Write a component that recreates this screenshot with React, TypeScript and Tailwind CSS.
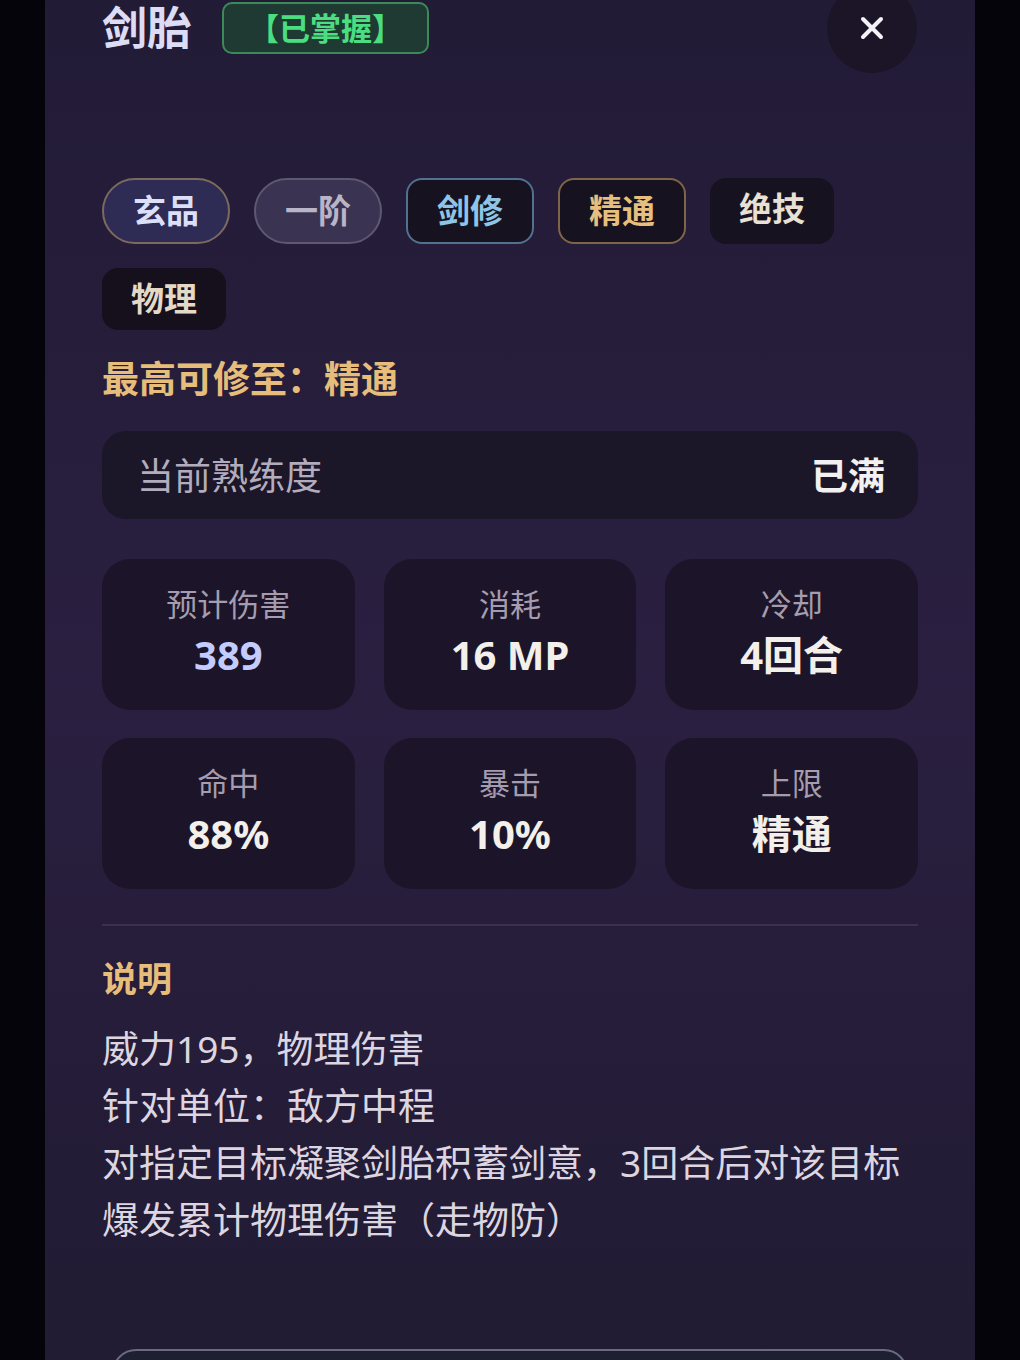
import React from 'react';

const tags = [
  { label: '玄品', cls: 'rounded-full border-2 border-[#7d6a5e] bg-[#2e2b55] text-[#dcdff8]' },
  { label: '一阶', cls: 'rounded-full border-2 border-[#5f5870] bg-[#3a3352] text-[#b9b5c8]' },
  { label: '剑修', cls: 'rounded-2xl border-2 border-[#52708f] bg-[#17121f] text-[#8ec5e6]' },
  { label: '精通', cls: 'rounded-2xl border-2 border-[#7f6548] bg-[#17121f] text-[#e6bf7e]' },
  { label: '绝技', cls: 'rounded-2xl bg-[#17121f] text-[#e8e0d4]' },
  { label: '物理', cls: 'rounded-2xl bg-[#15101c] text-[#e3d9c6]' },
];

const stats = [
  { label: '预计伤害', value: '389', accent: true },
  { label: '消耗', value: '16 MP' },
  { label: '冷却', value: '4回合' },
  { label: '命中', value: '88%' },
  { label: '暴击', value: '10%' },
  { label: '上限', value: '精通' },
];

const desc = ['威力195，物理伤害', '针对单位：敌方中程', '对指定目标凝聚剑胎积蓄剑意，3回合后对该目标', '爆发累计物理伤害（走物防）'];

export default function App() {
  return (
    <div
      className="w-[1020px] h-[1360px] overflow-hidden bg-[#05040a] flex justify-center"
      style={{ fontFamily: '"Noto Sans", "Noto Sans CJK SC", sans-serif' }}
    >
      <div className="w-[930px] h-full bg-gradient-to-b from-[#221b36] via-[#2a1f40] to-[#211b33] px-[57px]">
        {/* header, scrolled slightly past the top */}
        <div className="-mt-[17px] flex items-center justify-between">
          <div className="mt-[17px] flex items-center gap-[30px] self-start pt-0">
            <h2 className="text-[45px] font-bold leading-[56px] text-[#dcdcf5]">剑胎</h2>
            <span className="rounded-[10px] border-2 border-[#3c8a5a] bg-[#1f3a33] px-[24px] py-[4px] text-[31px] font-bold leading-[40px] text-[#4ade80]">
              【已掌握】
            </span>
          </div>
          <button className="mr-[1px] flex h-[90px] w-[90px] items-center justify-center rounded-full bg-[#1b1527]">
            <svg width="26" height="26" viewBox="0 0 26 26" fill="none" stroke="#f4f2f6" strokeWidth="4" strokeLinecap="round">
              <path d="M4 4L22 22M22 4L4 22" />
            </svg>
          </button>
        </div>

        {/* tags */}
        <div className="mt-[105px] flex flex-wrap gap-x-[24px] gap-y-[24px]">
          {tags.map(t => (
            <span key={t.label} className={`px-[29px] py-[11px] text-[33px] font-bold leading-[40px] ${t.cls}`}>
              {t.label}
            </span>
          ))}
        </div>

        <p className="mt-[25px] text-[37px] font-bold leading-[48px] text-[#e6bd7a]">最高可修至：精通</p>

        <div className="mt-[28px] flex h-[88px] items-center justify-between rounded-3xl bg-[#1c1629] pl-[35px] pr-[33px]">
          <span className="text-[37px] leading-none text-[#b3acbd]">当前熟练度</span>
          <span className="text-[37px] font-bold leading-none text-[#f2f0f0]">已满</span>
        </div>

        {/* stats */}
        <div className="mt-[40px] grid grid-cols-3 gap-x-[29px] gap-y-[28px]">
          {stats.map(s => (
            <div key={s.label} className="flex h-[151px] flex-col items-center justify-center rounded-[28px] bg-[#1c1529] pb-[6px]">
              <span className="text-[31px] leading-[40px] text-[#a59daf]">{s.label}</span>
              <span className={`mt-[6px] text-[40px] font-bold leading-[50px] ${s.accent ? 'text-[#c3cbff]' : 'text-[#f3efea]'}`}>
                {s.value}
              </span>
            </div>
          ))}
        </div>

        <div className="mt-[35px] h-[2px] bg-[#3a3050]" />

        <h3 className="mt-[31px] text-[35px] font-bold leading-[44px] text-[#e6bd7a]">说明</h3>
        <div className="mt-[19px] text-[37px] leading-[57px] text-[#ddd6e0]">
          {desc.map(l => (
            <p key={l}>{l}</p>
          ))}
        </div>

        <div className="mx-[10px] mt-[101px] h-[80px] rounded-[24px] border-2 border-[#6b6a80] bg-[#1d2030]" />
      </div>
    </div>
  );
}
